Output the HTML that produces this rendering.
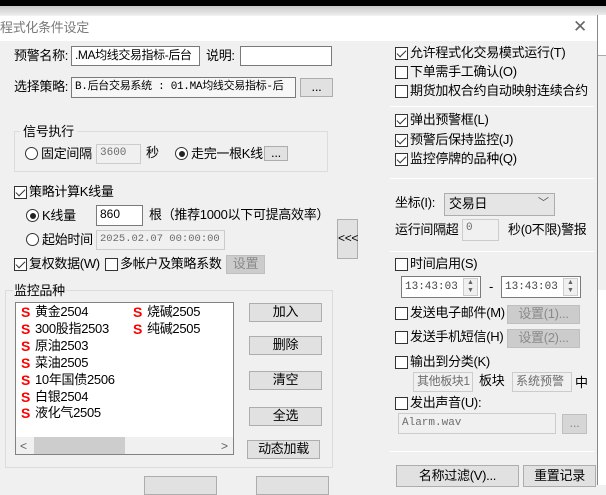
<!DOCTYPE html>
<html><head><meta charset="utf-8"><style>
*{margin:0;padding:0;box-sizing:border-box}
body{width:606px;height:485px;overflow:hidden;background:#f0f0f0;position:relative;font-family:"Liberation Sans","Noto Sans CJK SC",sans-serif;font-size:13px;color:#000}
.a{position:absolute;white-space:nowrap;line-height:16px;letter-spacing:-0.3px}
.in{position:absolute;background:#fff;border:1px solid #7a7a7a;font-size:11px;line-height:16px;padding-left:3px;overflow:hidden;white-space:nowrap;font-family:"Liberation Mono","Noto Sans CJK SC",monospace}
.dis{background:#f0f0f0;border-color:#ccc;color:#6d6d6d}
.btn{position:absolute;background:#e1e1e1;border:1px solid #adadad;text-align:center;font-size:13px;line-height:16px;letter-spacing:-0.3px}
.bd{color:#8a8a8a;background:#cccccc;border-color:#bfbfbf}
.cb{position:absolute;width:13px;height:13px;border:1px solid #333;background:#fff}
.cb.on::after{content:"";position:absolute;left:3px;top:0px;width:4px;height:8px;border:solid #333;border-width:0 1.5px 1.5px 0;transform:rotate(45deg)}
.rb{position:absolute;width:13px;height:13px;border:1px solid #333;border-radius:50%;background:#fff}
.rb.on::after{content:"";position:absolute;left:2.5px;top:2.5px;width:6px;height:6px;border-radius:50%;background:#222}
.grp{position:absolute;border:1px solid #dcdcdc}
.hl{position:absolute;height:1px;background:#a0a0a0;border-bottom:1px solid #fff}
.S{color:#f00;font-weight:bold;position:absolute;font-size:14px;line-height:16px}
</style></head><body>
<div style="position:absolute;left:0;top:0;width:606px;height:6px;background:#000"></div>
<div style="position:absolute;left:0;top:6px;width:606px;height:9px;background:linear-gradient(#c8c8c8,#ececec)"></div>
<div style="position:absolute;left:597px;top:15px;width:9px;height:470px;background:#fff"></div>
<div style="position:absolute;left:597px;top:55px;width:9px;height:235px;background:#f0f0f0;border-top:1px solid #aaa"></div>
<div style="position:absolute;left:0;top:15px;width:598px;height:470px;border-right:1px solid #888;background:#f0f0f0"></div>
<div style="position:absolute;left:0;top:16px;width:597px;height:25px;background:#fff"></div>
<div class="a" style="left:0;top:20px;color:#7a7a7a;font-size:13px">程式化条件设定</div>
<div class="a" style="left:573px;top:19px;color:#666;font-size:17px">✕</div>

<div class="a" style="left:14px;top:48px">预警名称:</div>
<div class="in" style="left:71px;top:46px;width:129px;height:20px;font-family:'Liberation Sans','Noto Sans CJK SC',sans-serif;font-size:12px;letter-spacing:-0.4px">.MA均线交易指标-后台</div>
<div class="a" style="left:206px;top:48px">说明:</div>
<div class="in" style="left:240px;top:46px;width:92px;height:20px"></div>
<div class="a" style="left:14px;top:79px">选择策略:</div>
<div class="in" style="left:71px;top:77px;width:225px;height:21px;background:#f7f7f7;padding-top:1px;letter-spacing:-0.3px">B.后台交易系统 : 01.MA均线交易指标-后</div>
<div class="btn" style="left:300px;top:78px;width:33px;height:19px">...</div>

<div class="grp" style="left:14px;top:131px;width:314px;height:41px"></div>
<div class="a" style="left:20px;top:124px;background:#f0f0f0;padding:0 3px">信号执行</div>
<div class="rb" style="left:25px;top:147px"></div>
<div class="a" style="left:41px;top:146px">固定间隔</div>
<div class="in dis" style="left:96px;top:144px;width:45px;height:20px">3600</div>
<div class="a" style="left:146px;top:145px">秒</div>
<div class="rb on" style="left:175px;top:147px"></div>
<div class="a" style="left:191px;top:146px">走完一根K线</div>
<div class="btn" style="left:264px;top:146px;width:24px;height:15px;line-height:12px">...</div>

<div class="cb on" style="left:14px;top:186px"></div>
<div class="a" style="left:29px;top:184px">策略计算K线量</div>
<div class="rb on" style="left:26px;top:209px"></div>
<div class="a" style="left:42px;top:208px">K线量</div>
<div class="in" style="left:96px;top:205px;width:47px;height:21px;font-family:'Liberation Sans',sans-serif;font-size:12px">860</div>
<div class="a" style="left:149px;top:207px">根（推荐1000以下可提高效率）</div>
<div class="rb" style="left:26px;top:233px"></div>
<div class="a" style="left:42px;top:232px">起始时间</div>
<div class="in dis" style="left:96px;top:230px;width:129px;height:20px;font-size:10.5px">2025.02.07 00:00:00</div>

<div class="cb on" style="left:14px;top:258px"></div>
<div class="a" style="left:29px;top:256px">复权数据(W)</div>
<div class="cb" style="left:105px;top:258px"></div>
<div class="a" style="left:120px;top:256px">多帐户及策略系数</div>
<div class="btn bd" style="left:226px;top:255px;width:39px;height:19px">设置</div>

<div class="grp" style="left:5px;top:290px;width:328px;height:178px"></div>
<div class="a" style="left:13px;top:283px;background:#f0f0f0;padding:0 1px">监控品种</div>
<div style="position:absolute;left:15px;top:302px;width:219px;height:153px;background:#fff;border:1px solid #828282"></div>
<div class="S" style="left:21px;top:304px">S</div><div class="a" style="left:35px;top:304px">黄金2504</div>
<div class="S" style="left:21px;top:321px">S</div><div class="a" style="left:35px;top:321px">300股指2503</div>
<div class="S" style="left:21px;top:338px">S</div><div class="a" style="left:35px;top:338px">原油2503</div>
<div class="S" style="left:21px;top:355px">S</div><div class="a" style="left:35px;top:355px">菜油2505</div>
<div class="S" style="left:21px;top:372px">S</div><div class="a" style="left:35px;top:372px">10年国债2506</div>
<div class="S" style="left:21px;top:389px">S</div><div class="a" style="left:35px;top:389px">白银2504</div>
<div class="S" style="left:21px;top:405px">S</div><div class="a" style="left:35px;top:405px">液化气2505</div>
<div class="S" style="left:133px;top:304px">S</div><div class="a" style="left:147px;top:304px">烧碱2505</div>
<div class="S" style="left:133px;top:321px">S</div><div class="a" style="left:147px;top:321px">纯碱2505</div>
<div style="position:absolute;left:16px;top:437px;width:217px;height:17px;background:#f0f0f0"></div>
<div style="position:absolute;left:34px;top:437px;width:91px;height:17px;background:#cdcdcd"></div>
<div class="a" style="left:20px;top:438px;color:#606060;font-size:12px">&lt;</div>
<div class="a" style="left:221px;top:438px;color:#606060;font-size:12px">&gt;</div>
<div class="btn" style="left:249px;top:303px;width:73px;height:19px">加入</div>
<div class="btn" style="left:249px;top:336px;width:73px;height:19px">删除</div>
<div class="btn" style="left:249px;top:371px;width:73px;height:19px">清空</div>
<div class="btn" style="left:249px;top:407px;width:73px;height:19px">全选</div>
<div class="btn" style="left:247px;top:440px;width:73px;height:19px">动态加载</div>
<div class="btn" style="left:144px;top:476px;width:73px;height:19px"></div>
<div class="btn" style="left:256px;top:476px;width:73px;height:19px"></div>
<div class="btn" style="left:337px;top:219px;width:21px;height:40px;line-height:36px;font-size:12px">&lt;&lt;&lt;</div>

<div class="cb on" style="left:395px;top:47px"></div><div class="a" style="left:410px;top:45px">允许程式化交易模式运行(T)</div>
<div class="cb" style="left:395px;top:66px"></div><div class="a" style="left:410px;top:64px">下单需手工确认(O)</div>
<div class="cb" style="left:395px;top:85px"></div><div class="a" style="left:410px;top:83px">期货加权合约自动映射连续合约</div>
<div class="hl" style="left:390px;top:106px;width:204px"></div>
<div class="cb on" style="left:395px;top:114px"></div><div class="a" style="left:410px;top:112px">弹出预警框(L)</div>
<div class="cb on" style="left:395px;top:134px"></div><div class="a" style="left:410px;top:132px">预警后保持监控(J)</div>
<div class="cb on" style="left:395px;top:153px"></div><div class="a" style="left:410px;top:151px">监控停牌的品种(Q)</div>
<div class="hl" style="left:390px;top:178px;width:204px"></div>
<div class="a" style="left:395px;top:195px">坐标(I):</div>
<div style="position:absolute;left:444px;top:193px;width:111px;height:23px;background:#e5e5e5;border:1px solid #adadad"></div>
<div class="a" style="left:449px;top:196px">交易日</div>
<div class="a" style="left:538px;top:195px;color:#555;font-size:11px">﹀</div>
<div class="a" style="left:395px;top:222px">运行间隔超</div>
<div class="in dis" style="left:462px;top:219px;width:37px;height:22px">0</div>
<div class="a" style="left:508px;top:222px">秒(0不限)警报</div>
<div class="hl" style="left:390px;top:251px;width:204px"></div>
<div class="cb" style="left:395px;top:258px"></div><div class="a" style="left:410px;top:256px">时间启用(S)</div>
<div class="in" style="left:401px;top:276px;width:80px;height:22px;padding-top:2px;color:#444">13:43:03</div>
<div style="position:absolute;left:463px;top:278px;width:15px;height:18px;border:1px solid #ccc;background:#f0f0f0;font-size:7px;color:#666;text-align:center;line-height:8px">▲<br>▼</div>
<div class="a" style="left:489px;top:279px">-</div>
<div class="in" style="left:501px;top:276px;width:80px;height:22px;padding-top:2px;color:#444">13:43:03</div>
<div style="position:absolute;left:563px;top:278px;width:15px;height:18px;border:1px solid #ccc;background:#f0f0f0;font-size:7px;color:#666;text-align:center;line-height:8px">▲<br>▼</div>
<div class="cb" style="left:395px;top:307px"></div><div class="a" style="left:410px;top:305px">发送电子邮件(M)</div>
<div class="btn bd" style="left:507px;top:305px;width:73px;height:19px">设置(1)...</div>
<div class="cb" style="left:395px;top:331px"></div><div class="a" style="left:410px;top:329px">发送手机短信(H)</div>
<div class="btn bd" style="left:507px;top:329px;width:73px;height:19px">设置(2)...</div>
<div class="cb" style="left:395px;top:356px"></div><div class="a" style="left:410px;top:354px">输出到分类(K)</div>
<div class="in dis" style="left:413px;top:372px;width:60px;height:20px;font-family:'Liberation Sans','Noto Sans CJK SC',sans-serif;font-size:12px;letter-spacing:-0.4px">其他板块1</div>
<div class="a" style="left:479px;top:373px">板块</div>
<div class="in dis" style="left:512px;top:372px;width:60px;height:20px;font-family:'Liberation Sans','Noto Sans CJK SC',sans-serif;font-size:12px">系统预警</div>
<div class="a" style="left:575px;top:375px">中</div>
<div class="cb" style="left:395px;top:397px"></div><div class="a" style="left:410px;top:395px">发出声音(U):</div>
<div class="in dis" style="left:398px;top:413px;width:158px;height:21px;padding-top:1px">Alarm.wav</div>
<div class="btn bd" style="left:562px;top:414px;width:25px;height:20px;background:#d6d6d6">...</div>
<div class="hl" style="left:390px;top:451px;width:204px"></div>
<div class="btn" style="left:396px;top:465px;width:123px;height:22px;padding-top:2px">名称过滤(V)...</div>
<div class="btn" style="left:523px;top:465px;width:73px;height:22px;padding-top:2px">重置记录</div>
</body></html>
